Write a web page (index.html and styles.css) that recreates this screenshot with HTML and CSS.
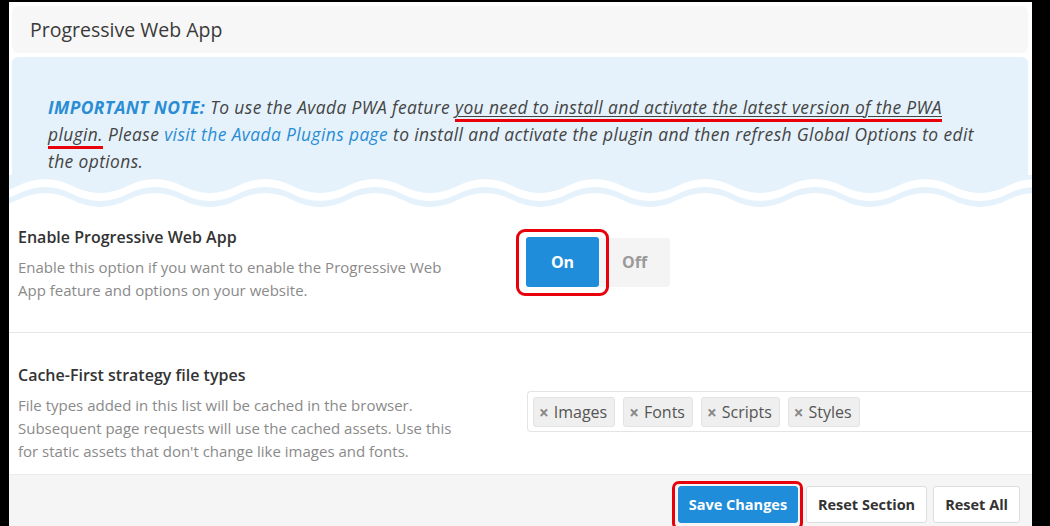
FILE: index.html
```html
<!DOCTYPE html>
<html>
<head>
<meta charset="utf-8">
<link rel="stylesheet" href="styles.css">
</head>
<body>
<div class="frame">
  <div class="header"><h2 class="title">Progressive Web App</h2></div>
  <div class="notice">
    <p class="notice-text"><strong class="imp">IMPORTANT NOTE:</strong> To use the Avada PWA feature <span class="mark"><u>you need to install and activate the latest version of the PWA</u> plugin.</span> Please <a class="link">visit the Avada Plugins page</a> to install and activate the plugin and then refresh Global Options to edit the options.</p>
    <svg class="wave" width="1023" height="35" viewBox="0 0 1023 35">
      <defs>
        <pattern id="w1" width="110" height="35" patternUnits="userSpaceOnUse" x="8.5" y="0">
          <path fill="#ffffff" d="M0 11 Q13.75 4 27.5 4 T55 11 T82.5 18 T110 11 L110 35 L0 35 Z"/>
        </pattern>
        <pattern id="w2" width="110" height="35" patternUnits="userSpaceOnUse" x="8.5" y="0">
          <path fill="#e5f2fb" d="M0 19 Q13.75 12 27.5 12 T55 19 T82.5 26 T110 19 L110 35 L0 35 Z"/>
        </pattern>
        <pattern id="w3" width="110" height="35" patternUnits="userSpaceOnUse" x="8.5" y="0">
          <path fill="#ffffff" d="M0 25 Q13.75 18 27.5 18 T55 25 T82.5 32 T110 25 L110 35 L0 35 Z"/>
        </pattern>
      </defs>
      <rect x="0" y="0" width="1023" height="35" fill="#e5f2fb"/>
      <rect x="0" y="0" width="1023" height="35" fill="url(#w1)"/>
      <rect x="0" y="0" width="1023" height="35" fill="url(#w2)"/>
      <rect x="0" y="0" width="1023" height="35" fill="url(#w3)"/>
    </svg>
  </div>

  <div class="row row-first">
    <div class="info">
      <h3 class="label">Enable Progressive Web App</h3>
      <p class="desc">Enable this option if you want to enable the Progressive Web App feature and options on your website.</p>
    </div>
    <div class="control control-toggle">
      <div class="toggle">
        <span class="opt opt-on">On</span>
        <span class="opt opt-off">Off</span>
      </div>
    </div>
  </div>

  <div class="row row-second">
    <div class="info">
      <h3 class="label">Cache-First strategy file types</h3>
      <p class="desc">File types added in this list will be cached in the browser. Subsequent page requests will use the cached assets. Use this for static assets that don't change like images and fonts.</p>
    </div>
    <div class="control control-tags">
      <div class="tagbox">
        <span class="tag"><span class="x">×</span>Images</span>
        <span class="tag"><span class="x">×</span>Fonts</span>
        <span class="tag"><span class="x">×</span>Scripts</span>
        <span class="tag"><span class="x">×</span>Styles</span>
      </div>
    </div>
  </div>

  <div class="footer">
    <button class="btn btn-primary">Save Changes</button>
    <button class="btn">Reset Section</button>
    <button class="btn">Reset All</button>
  </div>
</div>
</body>
</html>
```

FILE: styles.css
```css
html, body {
  margin: 0;
  padding: 0;
  background: #000;
}
body {
  font-family: "Open Sans", "Noto Sans", sans-serif;
  color: #333;
}
.frame {
  margin: 2px 18px 0 9px;
  height: 524px;
  background: #fff;
  overflow: hidden;
  display: flex;
  flex-direction: column;
}
.header {
  flex: none;
  margin: 4px 4px 0 3px;
  height: 47px;
  background: #f7f7f7;
  border-radius: 6px;
  display: flex;
  align-items: center;
  padding-left: 18px;
}
.title {
  margin: 0;
  font-size: 19.5px;
  font-weight: 400;
  color: #3a3a3a;
}
.notice {
  flex: none;
  margin: 4px 4px 0 3px;
  background: #e5f2fb;
  border-radius: 6px 6px 0 0;
  padding: 37px 40px 0 36px;
}
.notice-text {
  margin: 0;
  font-size: 17.4px;
  line-height: 27px;
  letter-spacing: 0.4px;
  font-style: italic;
  color: #444;
}
.imp {
  color: #2a8dd4;
  font-weight: 700;
}
.link {
  color: #2a8dd4;
}
.mark u {
  text-decoration: underline;
  text-decoration-thickness: 1px;
  text-underline-offset: 2px;
}
.mark {
  border-bottom: 3px solid #e8000b;
}
.wave {
  display: block;
  margin: 0 0 0 -39px;
}
.row {
  flex: none;
  display: flex;
  padding-left: 9px;
}
.row-first {
  padding-top: 16px;
  padding-bottom: 30px;
  border-bottom: 1px solid #e6e6e6;
}
.row-second {
  padding-top: 31px;
  padding-bottom: 11px;
}
.info {
  width: 440px;
}
.label {
  margin: 0;
  font-size: 16px;
  font-weight: 600;
  line-height: 22px;
  color: #333;
}
.desc {
  margin: 8px 0 0 0;
  font-size: 15px;
  line-height: 23px;
  color: #8a8a8a;
}
.control-toggle {
  margin-left: 68px;
  padding-top: 11px;
}
.toggle {
  display: flex;
  align-items: center;
}
.opt {
  display: flex;
  align-items: center;
  justify-content: center;
  font-weight: 700;
  font-size: 16px;
  border-radius: 3px;
}
.opt-on {
  width: 73px;
  height: 50px;
  background: #1f8dd9;
  color: #fff;
  position: relative;
  z-index: 1;
}
.opt-on::after {
  content: "";
  position: absolute;
  left: -10px;
  top: -8px;
  right: -10px;
  bottom: -9px;
  border: 3px solid #e8000b;
  border-radius: 9px;
}
.opt-off {
  width: 71px;
  height: 49px;
  background: #f4f4f4;
  color: #9a9a9a;
}
.control-tags {
  flex: 1;
  margin-left: 69px;
  padding-top: 27px;
}
.tagbox {
  display: flex;
  gap: 8px;
  height: 41px;
  box-sizing: border-box;
  border: 1px solid #e4e4e4;
  border-right: none;
  border-radius: 4px 0 0 4px;
  padding: 5px 5px;
}
.tag {
  display: flex;
  align-items: center;
  height: 30px;
  box-sizing: border-box;
  padding: 0 7px 0 5px;
  background: #efefef;
  border: 1px solid #e3e3e3;
  border-radius: 3px;
  font-size: 16px;
  color: #555;
}
.x {
  font-size: 17px;
  font-weight: 700;
  color: #888;
  margin-right: 5px;
}
.footer {
  flex: 1;
  background: #f5f5f5;
  border-top: 1px solid #ececec;
  display: flex;
  justify-content: flex-end;
  align-items: flex-start;
  gap: 6px;
  padding: 11px 12px 0 0;
}
.btn {
  font-family: "Open Sans", "Noto Sans", sans-serif;
  font-weight: 700;
  font-size: 14.5px;
  white-space: nowrap;
  height: 37px;
  padding: 0 11px;
  background: #fff;
  color: #333;
  border: 1px solid #dedede;
  border-radius: 3px;
}
.btn-primary {
  background: #1f8dd9;
  border-color: #1f8dd9;
  color: #fff;
  width: 120px;
  padding: 0;
  position: relative;
  margin-right: 2px;
}
.btn-primary::after {
  content: "";
  position: absolute;
  left: -7px;
  top: -6px;
  right: -6px;
  bottom: -8px;
  border: 3px solid #e8000b;
  border-radius: 7px;
}
```
